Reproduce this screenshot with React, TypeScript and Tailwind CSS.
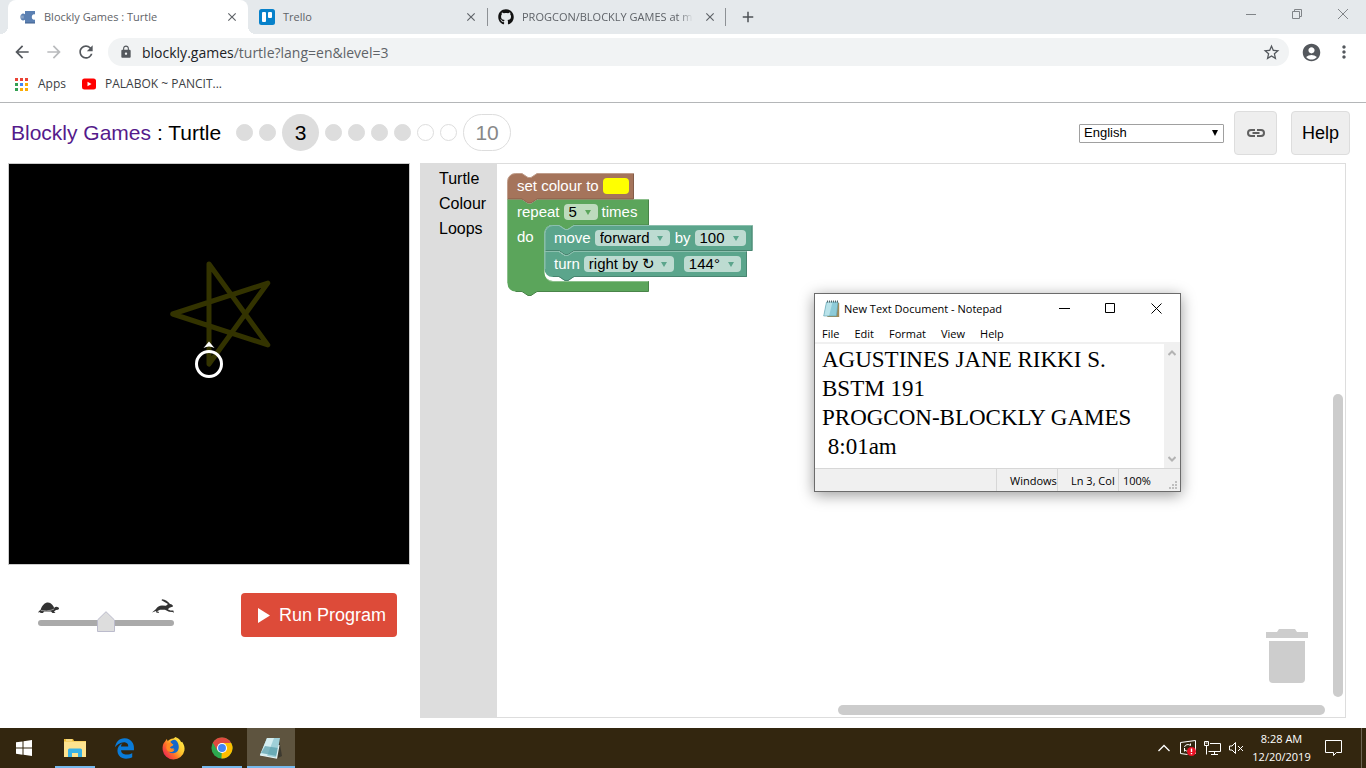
import { useState } from "react";
import type { ReactNode } from "react";
import {
  MdAccountCircle,
  MdAdd,
  MdArrowBack,
  MdArrowForward,
  MdClose,
  MdLock,
  MdMoreVert,
  MdRefresh,
  MdStarBorder,
} from "react-icons/md";
import { FaEdgeLegacy, FaGithub } from "react-icons/fa";

/* ---------- Browser chrome ---------- */

function PuzzleIcon() {
  return (
    <svg width="16" height="16" viewBox="0 0 16 16" aria-hidden="true">
      <path
        d="M5 2h10v3.500c-1.600-.9-3.200.4-3.200 2.500s1.600 3.400 3.200 2.500V14H5v-3.300C3.300 12.400.5 11.500.5 8S3.300 3.600 5 5.300z"
        fill="#5b80b2"
      />
      <path d="M.6 6.500h3.200v3H.6z" fill="#88a2c6" />
      <path d="M5 14h10" stroke="#3f5f8d" />
    </svg>
  );
}

function TrelloIcon() {
  return (
    <svg width="16" height="16" viewBox="0 0 16 16" aria-hidden="true">
      <rect width="16" height="16" rx="2.500" fill="#0781ca" />
      <rect x="3" y="3" width="4" height="10" rx="1" fill="#fff" />
      <rect x="9" y="3" width="4" height="6" rx="1" fill="#fff" />
    </svg>
  );
}

function CloseTab() {
  return (
    <button aria-label="Close tab" className="ml-auto shrink-0 text-[#5f6368]">
      <MdClose size={14} />
    </button>
  );
}

function TabStrip() {
  return (
    <div className="flex h-[34px] bg-[#e5e9ec] pl-2 text-[11px] text-[#5f6368]">
      <div className="relative flex w-60 items-center gap-2 rounded-t-lg bg-white pl-3 pr-[9px]">
        <span className="absolute -left-2 bottom-0 size-2 bg-[radial-gradient(circle_at_0_0,transparent_8px,white_8px)]" />
        <span className="absolute -right-2 bottom-0 size-2 bg-[radial-gradient(circle_at_100%_0,transparent_8px,white_8px)]" />
        <PuzzleIcon />
        <span className="whitespace-nowrap">Blockly Games : Turtle</span>
        <CloseTab />
      </div>
      <div className="flex w-[239px] items-center gap-2 pl-[11px] pr-[9px]">
        <TrelloIcon />
        <span>Trello</span>
        <CloseTab />
      </div>
      <div className="my-2 flex w-[239px] items-center gap-2 border-x border-[#8d9195] pl-[10px] pr-2">
        <FaGithub size={16} className="shrink-0 text-[#111]" />
        <span className="whitespace-nowrap [mask-image:linear-gradient(to_right,black_92%,transparent)]">
          PROGCON/BLOCKLY GAMES at m
        </span>
        <CloseTab />
      </div>
      <button aria-label="New tab" className="ml-[13px] text-[#4d5156]">
        <MdAdd size={18} />
      </button>
      <div className="ml-auto flex h-7 items-center gap-9 pr-[18px]">
        <button aria-label="Minimize window">
          <svg width="10" height="10" className="block">
            <path d="M0 5.500h10" stroke="#808488" />
          </svg>
        </button>
        <button aria-label="Restore window">
          <svg width="10" height="10" className="block" fill="none" stroke="#808488">
            <path d="M.5 2.500h7v7h-7zM2.500 2.500v-2h7v7h-2" />
          </svg>
        </button>
        <button aria-label="Close window">
          <svg width="10" height="10" className="block">
            <path d="M0 0l10 10M10 0L0 10" stroke="#808488" />
          </svg>
        </button>
      </div>
    </div>
  );
}

const appDots = [
  "#ea4335", "#ea4335", "#ea4335",
  "#34a053", "#4285f4", "#fbac05",
  "#34a053", "#fbac05", "#fbac05",
];

function BrowserBars() {
  return (
    <div className="border-b border-[#b4b6b8]">
      <div className="flex h-9 items-center pl-3 pr-[12px] text-[#54585d]">
        <div className="flex w-24 gap-3">
          <button aria-label="Back"><MdArrowBack size={20} /></button>
          <button aria-label="Forward" className="text-[#b9bbbd]"><MdArrowForward size={20} /></button>
          <button aria-label="Reload"><MdRefresh size={20} /></button>
        </div>
        <div className="flex h-7 min-w-0 flex-1 items-center rounded-full bg-[#f1f3f4] pl-[11px] pr-2">
          <MdLock size={14} />
          <div className="ml-[9px] flex-1 text-[14px] text-[#5f6368]">
            <span className="text-[#202124]">blockly.games</span>/turtle?lang=en&amp;level=3
          </div>
          <button aria-label="Bookmark this page"><MdStarBorder size={19} /></button>
        </div>
        <button aria-label="Profile" className="ml-3"><MdAccountCircle size={21} /></button>
        <button aria-label="Menu" className="ml-3"><MdMoreVert size={20} /></button>
      </div>
      <div className="flex h-8 items-center pb-1 pl-[14px] text-[12px] text-[#3c4043]">
        <a href="#apps" className="flex items-center gap-[10px]">
          <svg width="14" height="14" aria-hidden="true">
            {appDots.map((fill, i) => (
              <rect key={i} x={1 + (i % 3) * 5} y={1 + Math.floor(i / 3) * 5} width="3" height="3" fill={fill} />
            ))}
          </svg>
          Apps
        </a>
        <a href="#bookmark" className="ml-[15px] flex items-center gap-2">
          <svg width="16" height="16" viewBox="0 0 16 16" aria-hidden="true">
            <rect x="1" y="2.500" width="14" height="11" rx="2.500" fill="#f00" />
            <path d="M6.500 5.700v4.600l4-2.300z" fill="#fff" />
          </svg>
          PALABOK ~ PANCIT...
        </a>
      </div>
    </div>
  );
}

/* ---------- Game header ---------- */

function LevelLinks() {
  return (
    <nav aria-label="Levels" className="mb-[2px] ml-[15px] flex items-center gap-[6px]">
      {[1, 2, 3, 4, 5, 6, 7, 8, 9].map((n) =>
        n === 3 ? (
          <span key={n} className="flex size-[37px] items-center justify-center rounded-full bg-[#ddd] pt-px text-[21px]">
            3
          </span>
        ) : (
          <a
            key={n}
            href={`#level${n}`}
            aria-label={`Level ${n}`}
            className={`size-[17px] rounded-full border border-[#ddd] ${n < 8 ? "bg-[#ddd]" : "bg-white"}`}
          />
        ),
      )}
      <a href="#level10" className="flex h-[37px] w-12 items-center justify-center rounded-full border border-[#ddd] pt-px text-[21px] text-[#888]">
        10
      </a>
    </nav>
  );
}

function GameHeader() {
  return (
    <header className="flex h-[60px] items-center pl-[11px] pr-4">
      <h1 className="whitespace-nowrap text-[21px]">
        <a href="#home" className="text-[#551a8b]">Blockly Games</a> : Turtle
      </h1>
      <LevelLinks />
      <div className="ml-auto flex items-center">
        <div className="relative flex">
          <select aria-label="Language" className="h-[19px] w-[145px] appearance-none rounded-[1px] border border-[#a0a0a0] bg-white pl-1 text-[13px] leading-4">
            <option>English</option>
          </select>
          <svg width="8" height="7" className="pointer-events-none absolute right-[5px] top-[6px]">
            <path d="M1 0h6L4 6z" fill="#000" />
          </svg>
        </div>
        <button aria-label="Share link" className="ml-[10px] flex h-11 w-[43px] items-center justify-center rounded border border-[#ddd] bg-[#eee]">
          <svg width="18" height="8" fill="none" stroke="#606060" strokeWidth="2" aria-hidden="true">
            <path d="M8 1H4a3 3 0 0 0 0 6h4M10 1h4a3 3 0 0 1 0 6h-4M5.500 4h7" />
          </svg>
        </button>
        <button className="ml-[14px] h-11 w-[59px] rounded border border-[#ddd] bg-[#eee] text-[18px]">Help</button>
      </div>
    </header>
  );
}

/* ---------- Turtle display ---------- */

function TurtleCanvas() {
  return (
    <div className="border border-[#ccc] bg-black">
      <svg viewBox="0 0 400 400" className="block w-full" role="img" aria-label="Turtle drawing">
        <path
          d="M200 200V100L258.800 180.900 163.700 150 258.800 119.100z"
          fill="none"
          stroke="#333300"
          strokeWidth="5"
          strokeLinejoin="round"
        />
        <circle cx="200" cy="200" r="12.500" fill="none" stroke="#fff" strokeWidth="3" />
        <path d="M200 177.500l5.500 6.500q-5.500-3-11 0z" fill="#fff" />
      </svg>
    </div>
  );
}

function TurtleIcon() {
  return (
    <svg width="22" height="12" viewBox="0 0 22 12" fill="#333" aria-hidden="true">
      <path d="M2.500 8C4 3 7 .5 10 .5S15.500 3.500 16.500 7l-2 2h-12z" />
      <path d="M0 10.500Q1 7.500 4 8h11.500l1-2.500q1-1.200 3-.6 2 .6 1.500 2-.8 1.100-3 1.100L16 9.500l1.500 1.500h-3l-1.500-1.500H6L5 11H2l.5-1z" />
      <path d="M3 8.500q6 1 10-.3l3-1.200" stroke="#bbb" strokeWidth=".7" fill="none" />
    </svg>
  );
}

function RabbitIcon() {
  return (
    <svg width="22" height="15" viewBox="0 0 22 15" fill="#333" aria-hidden="true">
      <path d="M0 13.500l4-3.500q2-3.500 6-3.500l4 .2 2-1.700-6.500-3.700.6-1Q15 1 18 5q3 .5 3 2.500l-3.500 1.200-1.700 1.500 2.500 1.300h3l.7 2.200-1.500-.8-3.500-.2-4-2-5 0-3 1.500 2 .8v.8H4.500L4 12z" />
    </svg>
  );
}

function Controls() {
  const [speed, setSpeed] = useState(50);
  return (
    <div className="flex items-start justify-between pl-[30px] pr-[13px] pt-7">
      <div className="w-[136px] pt-[6px]">
        <div className="flex h-[15px] items-end justify-between">
          <TurtleIcon />
          <RabbitIcon />
        </div>
        <div className="relative pt-[6px]">
          <input
            type="range"
            aria-label="Speed"
            min={0}
            max={100}
            value={speed}
            onChange={(e) => setSpeed(Number(e.target.value))}
            className="block h-[6px] w-full appearance-none rounded-full bg-[#aaa] [&::-webkit-slider-thumb]:h-5 [&::-webkit-slider-thumb]:w-4 [&::-webkit-slider-thumb]:appearance-none [&::-webkit-slider-thumb]:bg-transparent"
          />
          <svg
            width="18"
            height="22"
            className="pointer-events-none absolute -top-[3px] -translate-x-1/2"
            style={{ left: `${speed}%` }}
          >
            <path d="M.5 20.500V9L9 .7 17.500 9v11.500z" fill="#ddd" stroke="#bbc" />
          </svg>
        </div>
      </div>
      <button className="flex h-11 w-[156px] items-center gap-[9px] rounded bg-[#dd4b39] pl-4 text-[18px] text-white">
        <svg width="13" height="15" aria-hidden="true" className="shrink-0">
          <path d="M1 0l12 7.500L1 15z" fill="#fff" />
        </svg>
        <span className="whitespace-nowrap">Run Program</span>
      </button>
    </div>
  );
}

/* ---------- Block workspace ---------- */

function Field({ label, value, size, arrow }: { label: string; value: string; size: string; arrow: string }) {
  return (
    <span className={`relative ${size}`}>
      <select aria-label={label} className="block h-4 w-full appearance-none rounded bg-white/60 pl-[5px] text-[15px] leading-4 text-black">
        <option>{value}</option>
      </select>
      <svg width="6" height="6" className="pointer-events-none absolute right-[7px] top-[6px]">
        <path d="M0 0h6L3 5z" fill={arrow} />
      </svg>
    </span>
  );
}

function BlockRow({ indent, children }: { indent?: boolean; children: ReactNode }) {
  return (
    <div className={`flex h-[26px] items-center gap-1 ${indent ? "pl-[47px]" : "pl-[10px]"}`}>{children}</div>
  );
}

const greenPath =
  "M.5 26.500H15l6 4h3l6-4H141.500V52H67l-6 4h-3l-6-4H45.500a8 8 0 0 0-8 8V100a8 8 0 0 0 8 8H141.500V118.500H30l-6 4h-3l-6-4H8.500a8 8 0 0 1-8-8z";

function Blocks() {
  return (
    <div className="absolute left-[10px] top-[9px] w-[250px] text-[15px] leading-6 text-white">
      <svg width="250" height="126" className="absolute left-0 top-0" fill="none" aria-hidden="true">
        <path d={greenPath} fill="#5ba55b" />
        <path d="M141.500 26.500V52H67M46 108.500H141.500V118.500H30l-6 4h-3l-6-4H8.500" stroke="#498449" />
        <path d="M.5 110V26.500H15M31 26.500h110M40 106a8 8 0 0 0 6 2.500h95" stroke="#8cc08c" />
        <path d="M.5 8.500a8 8 0 0 1 8-8H15l6 4h3l6-4h96.500V26H30l-6 4h-3l-6-4H.5z" fill="#a5745b" />
        <path d="M126.500.5V26H30l-6 4h-3l-6-4H.5" stroke="#845d49" />
        <path d="M.5 26V8.500a8 8 0 0 1 8-8H15l6 4h3l6-4h96" stroke="#c09e8c" />
        <path d="M37.500 78.500h14l6 4h3l6-4H240V104H67l-6 4h-3l-6-4h-6.500a8 8 0 0 1-8-8z" fill="#5ba58c" />
        <path d="M239.500 78.500V103.500H67l-6 4h-3l-6-4h-6" stroke="#498470" />
        <path d="M37.500 96V60a8 8 0 0 1 8-8h6.500l6 4h3l6-4H245.500V78H67l-6 4h-3l-6-4H37.500z" fill="#5ba58c" />
        <path d="M245 52.500V77.500H67l-6 4h-3l-6-4H38" stroke="#498470" />
        <path d="M38 96V60.500a8 8 0 0 1 8-8H52l6 4h3l6-4h178M38 78.500h14l6 4h3l6-4h172" stroke="#8cc0ae" />
      </svg>
      <div className="relative">
        <BlockRow>
          <span>set colour to</span>
          <button aria-label="Colour: yellow" className="h-4 w-[26px] rounded bg-[#ff0]" />
        </BlockRow>
        <BlockRow>
          <span>repeat</span>
          <Field label="Repeat count" value="5" size="w-[34px]" arrow="#5ba55b" />
          <span>times</span>
        </BlockRow>
        <span className="absolute left-[10px] top-[52px]">do</span>
        <BlockRow indent>
          <span>move</span>
          <Field label="Direction" value="forward" size="mr-px w-[75px]" arrow="#5ba58c" />
          <span>by</span>
          <Field label="Distance" value="100" size="w-[51px]" arrow="#5ba58c" />
        </BlockRow>
        <BlockRow indent>
          <span>turn</span>
          <Field label="Turn" value="right by ↻" size="mr-[6px] w-[90px]" arrow="#5ba58c" />
          <Field label="Angle" value="144°" size="w-[57px]" arrow="#5ba58c" />
        </BlockRow>
      </div>
    </div>
  );
}

function Workspace() {
  return (
    <section aria-label="Workspace" className="relative flex min-w-0 flex-1 border border-l-0 border-[#ddd]">
      <ul className="w-[77px] bg-[#ddd] pl-[19px] pt-[2px] text-[16px] leading-[25px]">
        <li><a href="#turtle">Turtle</a></li>
        <li><a href="#colour">Colour</a></li>
        <li><a href="#loops">Loops</a></li>
      </ul>
      <div className="relative flex-1">
        <Blocks />
        <svg width="42" height="54" className="absolute bottom-[34px] right-[37px]" fill="#cdcdcd" role="img" aria-label="Trash">
          <path d="M0 3h11l2-3h16l2 3h11v6H0zM3 12h36v38a4 4 0 0 1-4 4H7a4 4 0 0 1-4-4z" />
        </svg>
        <div className="absolute bottom-5 right-[2px] top-[230px] w-[10px] rounded-full bg-[#ccc]" />
        <div className="absolute bottom-[2px] left-[341px] right-5 h-[10px] rounded-full bg-[#ccc]" />
      </div>
    </section>
  );
}

/* ---------- Notepad ---------- */

const note = "AGUSTINES JANE RIKKI S.\nBSTM 191\nPROGCON-BLOCKLY GAMES\n 8:01am";

function NotepadGlyph() {
  return (
    <svg width="17" height="18" viewBox="0 0 17 18" aria-hidden="true">
      <path d="M13 2l3.200 1v14H4z" fill="#a08a58" />
      <path d="M3.500 2h11.500l-1.500 14H.7z" fill="#8dcbd8" />
      <path d="M3.500 2h6L6 16H.7z" fill="#b9e3ea" />
      <path d="M3.500 2h11.500l-1.500 14H.7z" fill="none" stroke="#5d9dac" strokeWidth=".6" />
      <path d="M4 1.500h11" stroke="#51666b" strokeWidth="2" strokeDasharray="1 1" />
    </svg>
  );
}

function Notepad() {
  return (
    <section
      aria-label="Notepad"
      className="absolute left-[814px] top-[293px] flex h-[199px] w-[367px] flex-col border border-[#6b6b6b] bg-white font-['Open_Sans','Noto_Sans',sans-serif] text-[11px] text-black shadow-[0_3px_14px_rgba(0,0,0,0.4)]"
    >
      <div className="flex h-[29px] items-center pl-2 pr-[18px]">
        <NotepadGlyph />
        <span className="ml-1 flex-1 whitespace-nowrap pt-px">New Text Document - Notepad</span>
        <div className="flex items-center gap-[35px]">
          <button aria-label="Minimize">
            <svg width="11" height="11" className="block"><path d="M0 5.500h11" stroke="#000" /></svg>
          </button>
          <button aria-label="Maximize">
            <svg width="11" height="11" className="block"><path d="M.5 .5h9v9h-9z" fill="none" stroke="#000" /></svg>
          </button>
          <button aria-label="Close">
            <svg width="11" height="11" className="block"><path d="M.5 .5l10 10M10.500 .5l-10 10" stroke="#000" /></svg>
          </button>
        </div>
      </div>
      <div className="flex h-[21px] items-center gap-[15px] border-b-2 border-[#f0f0f0] pl-[7px] pt-[3px]">
        <button>File</button>
        <button>Edit</button>
        <button>Format</button>
        <button>View</button>
        <button>Help</button>
      </div>
      <div className="flex min-h-0 flex-1">
        <textarea
          aria-label="Document text"
          defaultValue={note}
          spellCheck={false}
          className="flex-1 resize-none overflow-hidden whitespace-pre pl-[7px] pt-px font-['Liberation_Serif',serif] text-[23px] leading-[29px] outline-none"
        />
        <div className="flex w-4 flex-col items-center justify-between bg-[#f0f0f0] py-[6px]">
          <svg width="8" height="6"><path d="M.5 5L4 1.500 7.500 5" fill="none" stroke="#b3b3b3" strokeWidth="2" /></svg>
          <svg width="8" height="6"><path d="M.5 1L4 4.500 7.500 1" fill="none" stroke="#b3b3b3" strokeWidth="2" /></svg>
        </div>
      </div>
      <div className="relative flex h-[23px] border-t border-[#d7d7d7] bg-[#f0f0f0] leading-6">
        <span className="flex-1" />
        <span className="w-[61px] whitespace-nowrap border-l border-[#d7d7d7] pl-[13px]">Windows</span>
        <span className="w-[61px] whitespace-nowrap border-l border-[#d7d7d7] pl-[13px]">Ln 3, Col</span>
        <span className="w-[62px] border-l border-[#d7d7d7] pl-1">100%</span>
        <svg width="9" height="9" className="absolute bottom-px right-[2px]" fill="#bfbfbf">
          <path d="M6 0h2v2h-2zM3 3h2v2h-2zM6 3h2v2h-2zM0 6h2v2h-2zM3 6h2v2h-2zM6 6h2v2h-2z" />
        </svg>
      </div>
    </section>
  );
}

/* ---------- Taskbar ---------- */

function ExplorerIcon() {
  return (
    <svg width="22" height="20" viewBox="0 0 22 20" aria-hidden="true">
      <path d="M0 1h9l1 2h12v15H0z" fill="#f0bf3c" />
      <path d="M0 3.500h22V19H0z" fill="#fde38f" />
      <path d="M4 19v-7q0-1.500 1.500-1.500h11q1.500 0 1.500 1.500v7h-4v-4H8v4z" fill="#38b2e6" />
      <path d="M2 2h6" stroke="#fff3c4" />
    </svg>
  );
}

function FirefoxIcon() {
  return (
    <svg width="23" height="23" viewBox="0 0 24 24" aria-hidden="true">
      <defs>
        <linearGradient id="fox" x1="1" y1="0.100" x2="0" y2="0.900">
          <stop offset="0" stopColor="#fff44f" />
          <stop offset=".4" stopColor="#ffc22c" />
          <stop offset=".65" stopColor="#ff6a2a" />
          <stop offset="1" stopColor="#e3155f" />
        </linearGradient>
      </defs>
      <path d="M3 5l2-3 1 2.500C7 3 9 1.500 12 1.500L14 0c3 1 5 3 6 5.500l1-.5c2 3 3 6 2.400 9A11.500 11.500 0 0 1 .7 13.500C.3 10 1 7 3 5z" fill="url(#fox)" />
      <path d="M9 4.500q2-2 5-1.500 3.500 2.500 3.500 7.500c0 4-2.500 6.500-6 6.500-3 0-4.500-1.500-5-3.500 2 1.500 5 .8 6-1.500H9.500L8 10.500l2.500-1L12 8 9 6.500z" fill="#1767c9" />
      <path d="M6 7l3-1.500L11.500 8l-1.700 1.500L8 11l2 2h3c-1 3-5 3.500-7 1.500-2-2-2-5 0-7.500z" fill="#ff8a22" />
    </svg>
  );
}

function ChromeIcon() {
  return (
    <svg width="22" height="22" viewBox="0 0 24 24" aria-hidden="true">
      <circle cx="12" cy="12" r="11.500" fill="#2da94f" />
      <path d="M12 12V6.500h10a11.500 11.500 0 0 1-10.600 17z" fill="#fdbd00" />
      <path d="M2 6.300a11.500 11.500 0 0 1 20 .2H12L7 14.800z" fill="#e04a3f" />
      <circle cx="12" cy="12" r="5.500" fill="#fff" />
      <circle cx="12" cy="12" r="4.300" fill="#4285f4" />
    </svg>
  );
}

function NotepadTaskIcon() {
  return (
    <svg width="24" height="22" viewBox="0 0 24 22" aria-hidden="true">
      <path d="M20 2l3 17-4 2z" fill="#3d3a30" />
      <path d="M8 1h13l-3.500 20L1 18z" fill="#9fd0d8" />
      <path d="M8 1h7L8 19 1 18z" fill="#d5eef1" />
      <path d="M6 9l13 2-1.500 8L2 16z" fill="#4e96a5" opacity=".65" />
      <path d="M1 18l16.500 3L20 8" stroke="#e6f4f5" strokeWidth="1.200" fill="none" />
    </svg>
  );
}

function TaskButton({ label, state, children }: { label: string; state?: "open" | "active"; children: ReactNode }) {
  return (
    <button
      aria-label={label}
      className={`relative flex w-12 items-center justify-center ${state === "active" ? "bg-[#5e543f]" : ""}`}
    >
      {children}
      {state === "open" && <span className="absolute inset-x-1 bottom-0 h-[2px] bg-[#76b9ed]" />}
      {state === "active" && <span className="absolute inset-x-0 bottom-0 h-[2px] bg-[#76b9ed]" />}
    </button>
  );
}

function Taskbar() {
  return (
    <footer className="flex h-10 gap-px bg-[#33260f] text-white">
      <button aria-label="Start" className="flex w-[50px] items-center justify-center pr-[2px]">
        <svg width="16" height="16" fill="#fff">
          <path d="M0 2.300L6.500 1.400V7.500H0zM7.500 1.200L16 0V7.500H7.500zM0 8.500H6.500V14.700L0 13.800zM7.500 8.500H16V16L7.500 14.800z" />
        </svg>
      </button>
      <TaskButton label="File Explorer" state="open"><ExplorerIcon /></TaskButton>
      <TaskButton label="Microsoft Edge"><FaEdgeLegacy size={21} color="#0a7bd8" /></TaskButton>
      <TaskButton label="Firefox"><FirefoxIcon /></TaskButton>
      <TaskButton label="Google Chrome" state="open"><ChromeIcon /></TaskButton>
      <TaskButton label="Notepad" state="active"><NotepadTaskIcon /></TaskButton>
      <div className="ml-auto flex items-center gap-2">
        <button aria-label="Show hidden icons" className="mr-[2px]">
          <svg width="12" height="8" className="block"><path d="M.5 7L6 1.500 11.500 7" fill="none" stroke="#fff" strokeWidth="1.300" /></svg>
        </button>
        <svg width="16" height="16" fill="none" stroke="#fff" role="img" aria-label="Update required">
          <path d="M.5 2.500L15.500.5V14M.5 2.500v11l7 1" />
          <path d="M4.500 7a3.500 3 0 0 1 6-1.500V3.500M4.500 8v3.500M4.500 9.500a3.500 3 0 0 0 4 1.500" />
          <circle cx="11.500" cy="11.500" r="4.500" fill="#e81123" stroke="none" />
          <path d="M11.500 8.500v3.500M11.500 13v1.300" strokeWidth="1.400" />
        </svg>
        <svg width="17" height="16" fill="none" stroke="#fff" role="img" aria-label="Network">
          <path d="M.5 1.500h4v4h-4zM2.500 5.500v9M6 3.500h10.500v8h-12M10.500 11.500v3M7 14.500h7M1.500 3h2" />
        </svg>
        <svg width="15" height="14" fill="none" stroke="#fff" role="img" aria-label="Muted">
          <path d="M.5 5h2.500L6.500 1.500v11L3 9H.5zM9 5l5 5M14 5l-5 5" />
        </svg>
        <div className="w-[59px] whitespace-nowrap text-center text-[11px] leading-[18px]">
          <div>8:28 AM</div>
          <div>12/20/2019</div>
        </div>
        <button aria-label="Notifications" className="ml-[6px] mr-[11px]">
          <svg width="17" height="16" className="block"><path d="M.5.500h16v12h-5l-3 3v-3h-8z" fill="none" stroke="#fff" /></svg>
        </button>
        <span className="mr-1 h-10 w-px bg-[#6d6454]" />
      </div>
    </footer>
  );
}

export default function App() {
  return (
    <div className="relative flex min-h-screen flex-col bg-white font-['Liberation_Sans',Arial,sans-serif] text-black">
      <div className="font-['Open_Sans','Noto_Sans',sans-serif]">
        <TabStrip />
        <BrowserBars />
      </div>
      <GameHeader />
      <main className="mb-[10px] ml-2 mr-5 flex flex-1 gap-[10px]">
        <div className="w-[402px] shrink-0">
          <TurtleCanvas />
          <Controls />
        </div>
        <Workspace />
      </main>
      <div className="font-['Open_Sans','Noto_Sans',sans-serif]">
        <Taskbar />
      </div>
      <Notepad />
    </div>
  );
}
